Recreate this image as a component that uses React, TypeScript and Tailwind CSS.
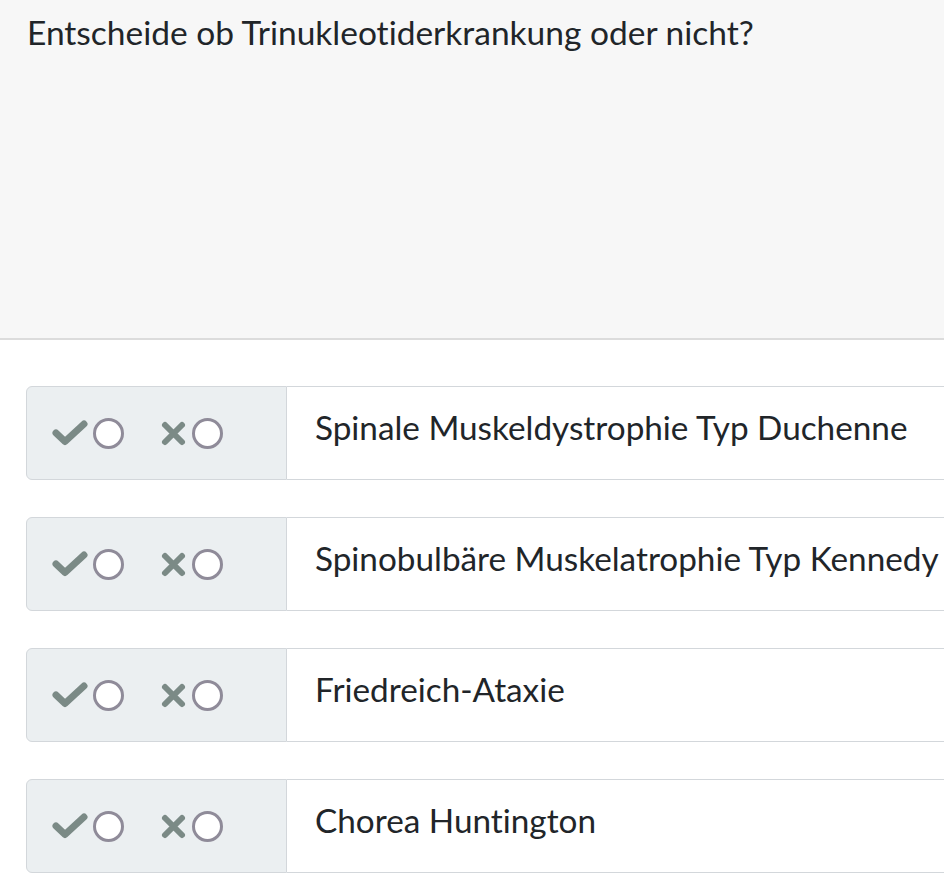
const items = [
  'Spinale Muskeldystrophie Typ Duchenne',
  'Spinobulbäre Muskelatrophie Typ Kennedy',
  'Friedreich-Ataxie',
  'Chorea Huntington',
];

const Radio = () => (
  <span className="inline-block w-[31px] h-[31px] rounded-full border-[3px] border-[#8f8b99] bg-white" />
);

const CheckIcon = () => (
  <svg width="36" height="26" viewBox="0 0 36 26" className="shrink-0">
    <polyline
      points="4,13 13,21.5 32,4"
      fill="none"
      stroke="#7b8a86"
      strokeWidth="7"
      strokeLinecap="round"
      strokeLinejoin="round"
    />
  </svg>
);

const CrossIcon = () => (
  <svg width="27" height="27" viewBox="0 0 27 27" className="shrink-0">
    <path
      d="M5 5 L22 22 M22 5 L5 22"
      fill="none"
      stroke="#7b8a86"
      strokeWidth="6"
      strokeLinecap="round"
    />
  </svg>
);

const Row = ({ label }: { label: string }) => (
  <div className="flex h-[94px] ml-[26px]">
    <div className="w-[261px] shrink-0 flex items-center pl-[25px] bg-[#ebeff1] border border-[#d3d7db] rounded-l-[6px]">
      <div className="flex items-center gap-[5px]">
        <CheckIcon />
        <Radio />
      </div>
      <div className="flex items-center gap-[5px] ml-[36px]">
        <CrossIcon />
        <Radio />
      </div>
    </div>
    <div className="flex-1 flex items-center pl-[28px] pb-[10px] bg-white border-y border-[#d3d7db] whitespace-nowrap overflow-hidden">
      <span className="text-[33.3px] text-[#212529] [font-variant-ligatures:none]">{label}</span>
    </div>
  </div>
);

export default function App() {
  return (
    <div className="w-[944px] h-[874px] overflow-hidden bg-white font-['Lato','Liberation_Sans',sans-serif]">
      <div className="h-[340px] bg-[#f7f7f7] border-b-2 border-[#dcdcdc] px-[27px] pt-[8px]">
        <h1 className="text-[33.5px] leading-[48px] text-[#212529] [font-variant-ligatures:none]">
          Entscheide ob Trinukleotiderkrankung oder nicht?
        </h1>
      </div>
      <div className="flex flex-col gap-[37px] pt-[46px]">
        {items.map((it) => (
          <Row key={it} label={it} />
        ))}
      </div>
    </div>
  );
}
